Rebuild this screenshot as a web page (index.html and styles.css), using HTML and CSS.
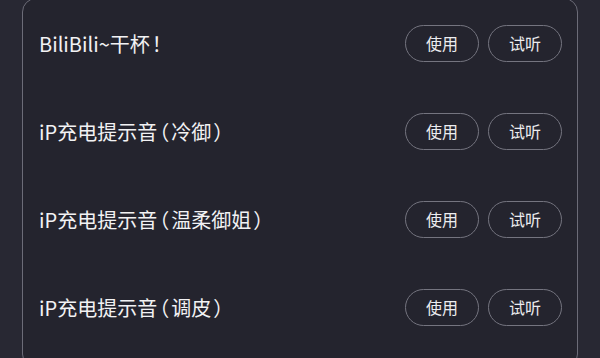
FILE: index.html
```html
<!DOCTYPE html>
<html lang="zh">
<head>
<meta charset="utf-8">
<link rel="stylesheet" href="styles.css">
</head>
<body>
<div class="card">
  <div class="row">
    <span class="name">BiliBili~干杯<span class="p">！</span></span>
    <div class="actions"><button class="btn">使用</button><button class="btn">试听</button></div>
  </div>
  <div class="row">
    <span class="name">iP充电提示音<span class="p">（</span>冷御<span class="p">）</span></span>
    <div class="actions"><button class="btn">使用</button><button class="btn">试听</button></div>
  </div>
  <div class="row">
    <span class="name">iP充电提示音<span class="p">（</span>温柔御姐<span class="p">）</span></span>
    <div class="actions"><button class="btn">使用</button><button class="btn">试听</button></div>
  </div>
  <div class="row">
    <span class="name">iP充电提示音<span class="p">（</span>调皮<span class="p">）</span></span>
    <div class="actions"><button class="btn">使用</button><button class="btn">试听</button></div>
  </div>
</div>
</body>
</html>
```
FILE: styles.css
```css
html, body {
  margin: 0;
  padding: 0;
  background: #282833;
  height: 100%;
  overflow: hidden;
}
body {
  font-family: "Noto Sans CJK SC", "Noto Sans", sans-serif;
  color: #f2f2f4;
}
.card {
  margin: -2px 0 0 22px;
  width: 556px;
  box-sizing: border-box;
  border: 1px solid #6c6c78;
  border-radius: 14px;
  background: #24242e;
  height: 370px;
}
.row {
  height: 88px;
  display: flex;
  align-items: center;
  justify-content: space-between;
  padding: 0 15px 0 16px;
}
.name {
  font-size: 20px;
  letter-spacing: 0;
}
.p {
  font-feature-settings: "halt" 1;
  margin: 0 2px;
}
.actions {
  display: flex;
  gap: 9px;
}
.btn {
  width: 74px;
  height: 37px;
  box-sizing: border-box;
  border: 1px solid #74747f;
  border-radius: 19px;
  background: transparent;
  color: #ececef;
  font-family: "Noto Sans CJK SC", sans-serif;
  font-size: 16px;
  padding: 0;
}
```
